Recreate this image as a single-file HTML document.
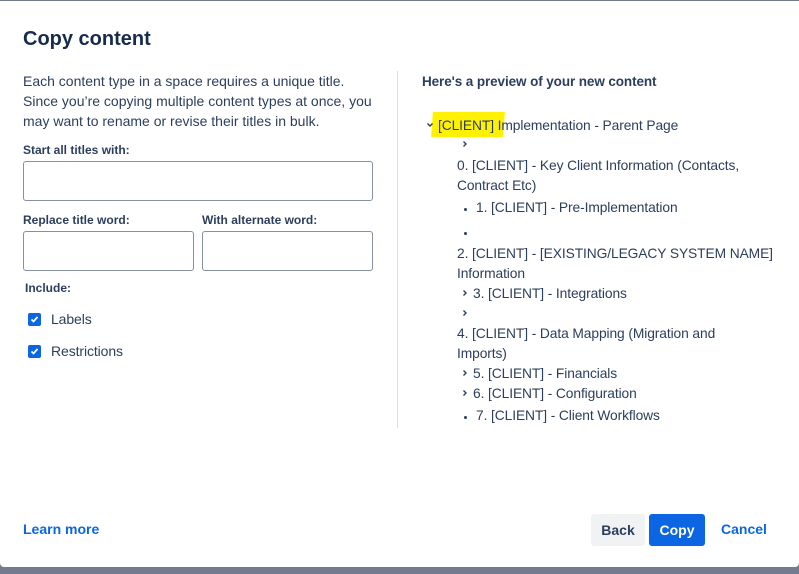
<!DOCTYPE html>
<html><head><meta charset="utf-8"><style>
*{margin:0;padding:0;box-sizing:border-box}
body{width:799px;height:574px;background:#737b8c;font-family:"Liberation Sans",sans-serif;color:#172b4d;overflow:hidden;position:relative}
.dlg{position:absolute;left:0;top:1px;width:799px;height:566px;background:#fff;border-radius:0 0 4px 4px}
.a{position:absolute;white-space:nowrap}
h1{position:absolute;left:23px;top:27px;font-size:20px;font-weight:bold;color:#172b4d}
.p{font-size:14px;line-height:20px;color:#2c3e5d}
.lbl{font-size:12px;font-weight:bold;color:#2c3e5d}
.inp{position:absolute;border:1px solid #8590a2;border-radius:3px;background:#fff}
.cb{position:absolute;width:13px;height:13px;background:#0c66e4;border-radius:2px}
.cb svg{position:absolute;left:1px;top:1px}
.t{font-size:13.8px;letter-spacing:-0.1px;color:#2c3e5d;position:absolute;white-space:nowrap}
.chev{position:absolute}
.dot{position:absolute;width:3px;height:3px;border-radius:50%;background:#2c3e5d}
</style></head><body>
<div class="dlg">
<h1>Copy content</h1>
<div class="a p" style="left:23px;top:70px">Each content type in a space requires a unique title.<br>Since you’re copying multiple content types at once, you<br>may want to rename or revise their titles in bulk.</div>
<div class="a lbl" style="left:23px;top:142px">Start all titles with:</div>
<div class="inp" style="left:23px;top:160px;width:350px;height:40px"></div>
<div class="a lbl" style="left:23px;top:212px">Replace title word:</div>
<div class="a lbl" style="left:202px;top:212px">With alternate word:</div>
<div class="inp" style="left:23px;top:230px;width:171px;height:40px"></div>
<div class="inp" style="left:202px;top:230px;width:171px;height:40px"></div>
<div class="a lbl" style="left:25px;top:280px">Include:</div>
<div class="cb" style="left:28px;top:312px"><svg width="11" height="11" viewBox="0 0 11 11"><path d="M2.5 5.5l2 2 4-4.5" stroke="#fff" stroke-width="1.8" fill="none"/></svg></div>
<div class="t" style="left:51px;top:310px;font-size:14px">Labels</div>
<div class="cb" style="left:28px;top:344px"><svg width="11" height="11" viewBox="0 0 11 11"><path d="M2.5 5.5l2 2 4-4.5" stroke="#fff" stroke-width="1.8" fill="none"/></svg></div>
<div class="t" style="left:51px;top:342px;font-size:14px">Restrictions</div>
<div class="a" style="left:397px;top:70px;width:1px;height:357px;background:#dcdfe4"></div>
<div class="a" style="left:422px;top:73px;font-size:13.5px;font-weight:bold;color:#2c3e5d;letter-spacing:-0.1px">Here's a preview of your new content</div>
<div class="a" style="left:432px;top:111px;width:72px;height:25px;background:#fff200;transform:skewX(-4deg)"></div>
<svg class="chev" style="left:426px;top:121px" width="8" height="6" viewBox="0 0 8 6"><path d="M1.5 1.5l2.5 2.5 2.5-2.5" stroke="#2c3e5d" stroke-width="1.4" fill="none"/></svg>
<div class="t" style="left:438px;top:117px">[CLIENT] Implementation - Parent Page</div>
<svg class="chev" style="left:462px;top:139px" width="6" height="8" viewBox="0 0 6 8"><path d="M1.5 1.5l2.5 2.5-2.5 2.5" stroke="#2c3e5d" stroke-width="1.4" fill="none"/></svg>
<div class="t" style="left:457px;top:157px">0. [CLIENT] - Key Client Information (Contacts,</div>
<div class="t" style="left:457px;top:177px">Contract Etc)</div>
<div class="dot" style="left:464px;top:207px"></div>
<div class="t" style="left:476px;top:199px">1. [CLIENT] - Pre-Implementation</div>
<div class="dot" style="left:464px;top:231px"></div>
<div class="t" style="left:457px;top:245px">2. [CLIENT] - [EXISTING/LEGACY SYSTEM NAME]</div>
<div class="t" style="left:457px;top:265px">Information</div>
<svg class="chev" style="left:462px;top:288px" width="6" height="8" viewBox="0 0 6 8"><path d="M1.5 1.5l2.5 2.5-2.5 2.5" stroke="#2c3e5d" stroke-width="1.4" fill="none"/></svg>
<div class="t" style="left:473px;top:285px">3. [CLIENT] - Integrations</div>
<svg class="chev" style="left:462px;top:308px" width="6" height="8" viewBox="0 0 6 8"><path d="M1.5 1.5l2.5 2.5-2.5 2.5" stroke="#2c3e5d" stroke-width="1.4" fill="none"/></svg>
<div class="t" style="left:457px;top:325px">4. [CLIENT] - Data Mapping (Migration and</div>
<div class="t" style="left:457px;top:345px">Imports)</div>
<svg class="chev" style="left:462px;top:368px" width="6" height="8" viewBox="0 0 6 8"><path d="M1.5 1.5l2.5 2.5-2.5 2.5" stroke="#2c3e5d" stroke-width="1.4" fill="none"/></svg>
<div class="t" style="left:473px;top:365px">5. [CLIENT] - Financials</div>
<svg class="chev" style="left:462px;top:388px" width="6" height="8" viewBox="0 0 6 8"><path d="M1.5 1.5l2.5 2.5-2.5 2.5" stroke="#2c3e5d" stroke-width="1.4" fill="none"/></svg>
<div class="t" style="left:473px;top:385px">6. [CLIENT] - Configuration</div>
<div class="dot" style="left:464px;top:415px"></div>
<div class="t" style="left:476px;top:407px">7. [CLIENT] - Client Workflows</div>
<div class="a" style="left:23px;top:520px;font-size:14px;font-weight:bold;color:#0c66e4">Learn more</div>
<div class="a" style="left:591px;top:513px;width:54px;height:32px;background:#f1f2f4;border-radius:3px;font-size:14px;font-weight:bold;color:#2c3e5d;text-align:center;line-height:32px">Back</div>
<div class="a" style="left:649px;top:513px;width:56px;height:32px;background:#0c66e4;border-radius:3px;font-size:14px;font-weight:bold;color:#fff;text-align:center;line-height:32px">Copy</div>
<div class="a" style="left:721px;top:520px;font-size:14px;font-weight:bold;color:#0c66e4">Cancel</div>
</div>
</body></html>
